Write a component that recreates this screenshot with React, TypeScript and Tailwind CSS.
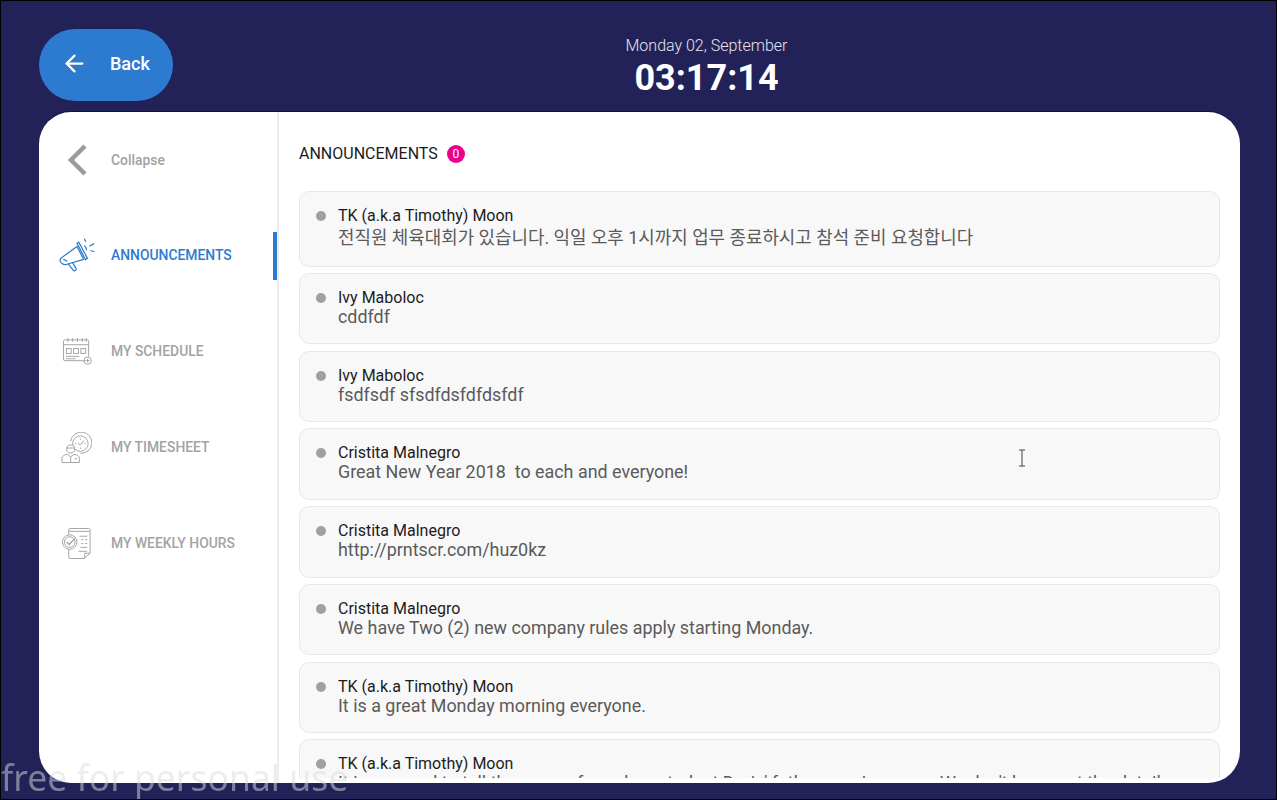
import React from "react";
import { ArrowLeft } from "lucide-react";

function Megaphone({ className }: { className?: string }) {
  return (
    <svg viewBox="0 0 40 36" className={className} fill="none" stroke="currentColor" strokeWidth="1.3" strokeLinejoin="round" strokeLinecap="round">
      <path d="M3.5 20.5 L20 8.5 L27 22 L8.5 27.5 C5.5 28 2.5 25.5 2.2 23.5 C2 22 2.5 21.2 3.5 20.5 Z" />
      <path d="M20 5 L22 4 L31 21 L29 22.5 Z" />
      <path d="M11 27 L16 33.5 C17.5 35 20 33 19 31.5 L15.5 25.8" />
      <path d="M6 22 L9.5 24" />
      <path d="M28 8 C29.5 9 30 10.5 30 12" />
      <path d="M29 3 L28 0.8 M33.5 8 L37.5 5.8 M34.5 13 L38 13.8" />
    </svg>
  );
}

function Calendar({ className }: { className?: string }) {
  return (
    <svg viewBox="0 0 32 30" className={className} fill="none" stroke="currentColor" strokeWidth="1">
      <path d="M24 24.5 H3 C2 24.5 1.5 24 1.5 23 V4.5 C1.5 3.5 2 3 3 3 H26 C27 3 27.5 3.5 27.5 4.5 V20" />
      <path d="M1.5 8 H27.5 M6 1 V5 M11 1 V5 M16 1 V5 M21 1 V5 M25 1 V5" />
      <rect x="4.5" y="12" width="5" height="5" />
      <rect x="12" y="12" width="5" height="5" />
      <rect x="19.5" y="12" width="5" height="5" />
      <path d="M4 20 H18 M4 22.5 H14" />
      <circle cx="26.5" cy="24.5" r="3.8" />
      <path d="M26.5 22.5 V26.5 M24.5 24.5 H28.5" />
    </svg>
  );
}

function TimeUser({ className }: { className?: string }) {
  return (
    <svg viewBox="0 0 32 32" className={className} fill="none" stroke="currentColor" strokeWidth="1">
      <path d="M10 9 A11 11 0 1 1 20 21.5" />
      <circle cx="20" cy="11.5" r="8" />
      <path d="M20 6 V7.5 M20 15.5 V17 M14.5 11.5 H16 M24 11.5 H25.5" />
      <path d="M17.5 11 L20 13 L23.5 8.5" />
      <circle cx="10" cy="17" r="4.2" fill="#ffffff" />
      <path d="M5.8 16 H14.2" />
      <path d="M1 31 V26.5 C1 24.5 3 23 6.5 22.5 L10 25 L13.5 22.5 C17 23 19 24.5 19 26.5 V31 Z" fill="#ffffff" />
      <path d="M10 25 V31 M14 27 H16.5" />
    </svg>
  );
}

function Checklist({ className }: { className?: string }) {
  return (
    <svg viewBox="0 0 32 34" className={className} fill="none" stroke="currentColor" strokeWidth="1">
      <path d="M8 8 V3 C8 2 8.5 1.5 9.5 1.5 H28.5 C29.5 1.5 30 2 30 3 V27 L24 32.5 H9.5 C8.5 32.5 8 32 8 31 V23" />
      <path d="M8 4.5 H30" />
      <path d="M30 27 H24.5 V32.5" />
      <path d="M19 9.5 H27 M21 13 H23 M25 13 H27 M21 17 H23 M25 17 H27 M20 21 H27 M18 25 H27" />
      <circle cx="9" cy="15.5" r="7.5" />
      <circle cx="9" cy="15.5" r="5.5" />
      <path d="M5.8 15.5 L8.5 18 L14 12" strokeWidth="1.4" />
    </svg>
  );
}

const items = [
  { name: "TK (a.k.a Timothy) Moon", msg: "전직원 체육대회가 있습니다. 익일 오후 1시까지 업무 종료하시고 참석 준비 요청합니다", tall: true },
  { name: "Ivy Maboloc", msg: "cddfdf" },
  { name: "Ivy Maboloc", msg: "fsdfsdf sfsdfdsfdfdsfdf" },
  { name: "Cristita Malnegro", msg: "Great New Year 2018  to each and everyone!" },
  { name: "Cristita Malnegro", msg: "http://prntscr.com/huz0kz" },
  { name: "Cristita Malnegro", msg: "We have Two (2) new company rules apply starting Monday." },
  { name: "TK (a.k.a Timothy) Moon", msg: "It is a great Monday morning everyone." },
  { name: "TK (a.k.a Timothy) Moon", msg: "It is very sad to tell the news of our dear student Doris' father passing away. We don't know yet the details" },
];

function NavItem({ icon, label, active }: { icon: React.ReactNode; label: string; active?: boolean }) {
  return (
    <div className={`relative h-12 flex items-center text-[13.9px] font-medium ${active ? "text-[#2d7bd1]" : "text-[#a3a3a3]"}`}>
      <div className="w-[72px] flex justify-center pl-[3px] shrink-0">{icon}</div>
      <span>{label}</span>
      {active && <div className="absolute right-0 top-0 bottom-0 w-1 bg-[#2d7bd1]" />}
    </div>
  );
}

export default function App() {
  return (
    <div
      className="relative w-[1277px] h-[800px] overflow-hidden bg-[#222259] border border-black flex flex-col"
      style={{ fontFamily: 'Roboto, "Noto Sans CJK KR", sans-serif' }}
    >
      <header className="h-[111px] shrink-0 flex pl-[38px] pr-9 pt-7">
        <button className="w-[134px] h-[72px] rounded-full bg-[#2d7bd1] text-white flex items-center pl-[21.5px] pb-[3px] gap-[22.5px] text-[18px] font-medium">
          <ArrowLeft size={27} strokeWidth={2} />
          <span>Back</span>
        </button>
        <div className="flex-1 flex flex-col items-center text-white pt-[7px]">
          <div className="text-[16px] font-light leading-[20px] text-[#e4e4ec]">Monday 02, September</div>
          <div className="text-[36px] font-bold leading-[42px] mt-[1px]">03:17:14</div>
        </div>
      </header>

      <main className="ml-[38px] mr-9 h-[671px] shrink-0 bg-white rounded-[32px] shadow-[0_-1px_0_#11114a] flex overflow-hidden">
        <aside className="w-[240px] shrink-0 border-r-2 border-[#eeeeee] flex flex-col gap-[47.9px] pt-6">
          <div className="h-12 flex items-center text-[13.9px] font-medium text-[#a3a3a3]">
            <div className="w-[72px] flex justify-center pl-[3px] shrink-0">
              <svg viewBox="0 0 22 32" className="w-[22px] h-[32px] text-[#9b9b9b]" fill="none" stroke="currentColor" strokeWidth="4.5">
                <path d="M19 2 L5 16 L19 30" />
              </svg>
            </div>
            <span>Collapse</span>
          </div>
          <NavItem active label="ANNOUNCEMENTS" icon={<Megaphone className="w-[38px] h-[35px]" />} />
          <NavItem label="MY SCHEDULE" icon={<Calendar className="w-[31px] h-[29px] ml-[2px]" />} />
          <NavItem label="MY TIMESHEET" icon={<TimeUser className="w-[31px] h-[32px]" />} />
          <NavItem label="MY WEEKLY HOURS" icon={<Checklist className="w-[31px] h-[33px]" />} />
        </aside>

        <section className="flex-1 min-w-0 flex flex-col pl-5 pr-5 pb-[5px]">
          <div className="h-[79px] shrink-0 flex items-center gap-[9px] pt-1 text-[16px] text-[#1c1c1c]">
            <span>ANNOUNCEMENTS</span>
            <span className="w-[18px] h-[18px] rounded-full bg-[#ec008c] text-white text-[12px] flex items-center justify-center">0</span>
          </div>
          <div className="flex-1 min-h-0 overflow-hidden flex flex-col gap-[6.25px]">
            {items.map((it, i) => (
              <div key={i} className={`shrink-0 flex rounded-[10px] border border-[#e8e8e8] bg-[#f8f8f8] pl-4 pr-4 pt-[14px] ${it.tall ? "pb-[14.5px]" : "pb-[17px]"}`}>
                <div className="w-[22px] shrink-0 pt-[5px]">
                  <div className="w-[10px] h-[10px] rounded-full bg-[#a0a0a0]" />
                </div>
                <div className="min-w-0">
                  <div className="text-[16px] leading-[19px] text-[#1c1c1c]">{it.name}</div>
                  <div className={`text-[17.9px] text-[#5a5a5a] whitespace-pre ${it.tall ? "leading-[26px]" : "leading-[19.5px]"}`}>{it.msg}</div>
                </div>
              </div>
            ))}
          </div>
        </section>
      </main>

      <svg viewBox="0 0 10 18" className="absolute left-[1016px] top-[448px] w-[10px] h-[18px] text-[#444444]" fill="none" stroke="currentColor" strokeWidth="1">
        <path d="M2 1 H8 M5 1 V17 M2 17 H8" />
      </svg>
      <div
        className="absolute left-0 top-[753px] text-[35.5px] leading-[46px] text-[#dcdcdc]/50 blur-[0.5px] whitespace-nowrap"
        style={{ fontFamily: '"Noto Sans", sans-serif' }}
      >
        free for personal use
      </div>
    </div>
  );
}
